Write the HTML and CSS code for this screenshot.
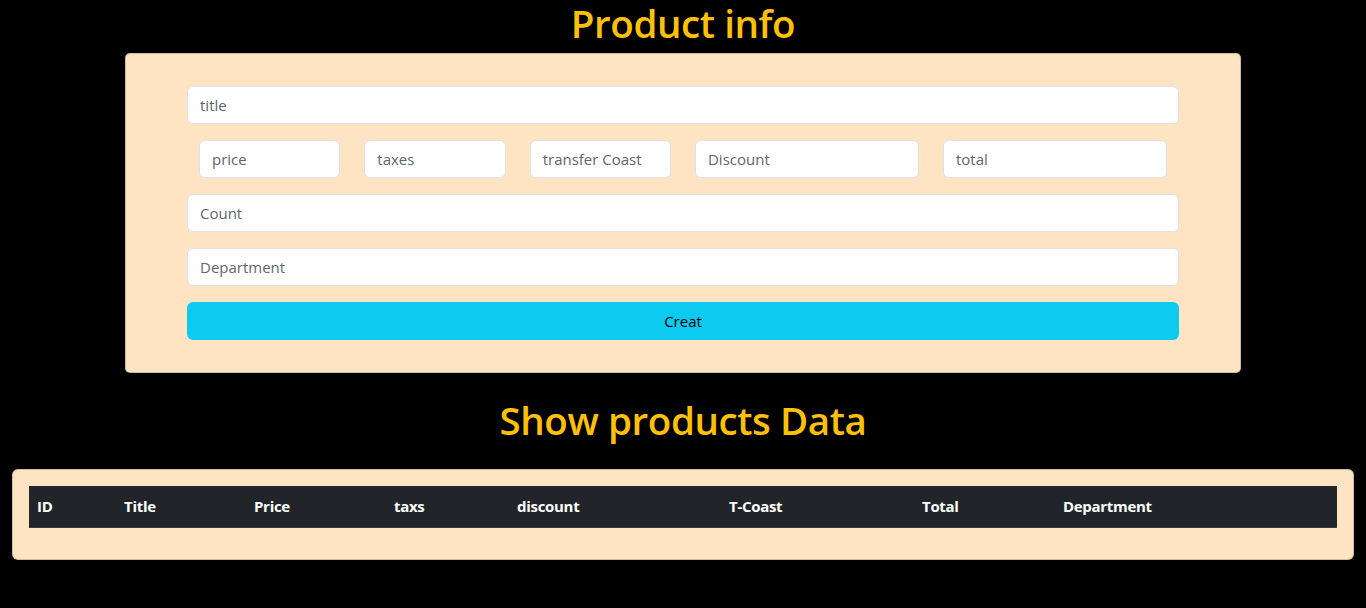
FILE: index.html
```html
<!DOCTYPE html>
<html>
<head>
<meta charset="utf-8">
<link rel="stylesheet" href="styles.css">
</head>
<body>
<div class="container">
  <h1 class="heading first">Product info</h1>
  <div class="form-card">
    <input class="field" placeholder="title">
    <div class="row">
      <div class="col c2"><input class="field" placeholder="price"></div>
      <div class="col c2"><input class="field" placeholder="taxes"></div>
      <div class="col c2"><input class="field" placeholder="transfer Coast"></div>
      <div class="col c3"><input class="field" placeholder="Discount"></div>
      <div class="col c3"><input class="field" placeholder="total"></div>
    </div>
    <input class="field" placeholder="Count">
    <input class="field" placeholder="Department">
    <button class="btn">Creat</button>
  </div>
</div>
<h1 class="heading second">Show products Data</h1>
<div class="table-card">
  <table class="table">
    <thead>
      <tr>
        <th class="w1">ID</th>
        <th class="w2">Title</th>
        <th class="w3">Price</th>
        <th class="w4">taxs</th>
        <th class="w5">discount</th>
        <th class="w6">T-Coast</th>
        <th class="w7">Total</th>
        <th class="w8">Department</th>
      </tr>
    </thead>
  </table>
</div>
</body>
</html>
```
FILE: styles.css
```css
* { box-sizing: border-box; }
html, body { margin: 0; padding: 0; }
body {
  background: #000;
  font-family: "Open Sans", "Noto Sans", sans-serif;
  font-size: 16px;
  color: #212529;
}
.container {
  width: 1116px;
  margin: 0 auto;
}
.heading {
  color: #ffc107;
  text-align: center;
  font-weight: 600;
  font-size: 38.5px;
  line-height: 46px;
  margin: 0;
  letter-spacing: -0.4px;
}
.heading.first { padding-bottom: 7px; }
.heading.second { padding-top: 24px; padding-bottom: 26px; }
.form-card {
  background: #ffe4c4;
  border: 1px solid rgba(0,0,0,0.18);
  border-radius: 5px;
  padding: 32px 61px 32px 61px;
  display: flex;
  flex-direction: column;
  gap: 16px;
}
.field {
  display: block;
  width: 100%;
  height: 38px;
  padding: 6px 12px;
  font-family: inherit;
  font-size: 15px;
  border: 1px solid #dee2e6;
  border-radius: 6px;
  background: #fff;
  color: #212529;
  outline: none;
}
.field::placeholder { color: #5f656c; opacity: 1; }
.row { display: flex; }
.col { padding: 0 12px; }
.c2 { width: 16.6667%; }
.c3 { width: 25%; }
.btn {
  display: block;
  width: 100%;
  height: 38px;
  border: none;
  border-radius: 6px;
  background: #0dcaf0;
  color: #000;
  font-family: inherit;
  font-size: 15px;
}
.table-card {
  margin: 0 12px;
  background: #ffe4c4;
  border: 1px solid rgba(0,0,0,0.18);
  border-radius: 6px;
  padding: 16px;
}
.table {
  width: 100%;
  border-collapse: collapse;
  table-layout: fixed;
  margin-bottom: 15px;
}
.table th {
  background: #212529;
  color: #fff;
  text-align: left;
  font-weight: 700;
  font-size: 15px;
  height: 41px;
  padding: 0 8px;
  border-bottom: 1px solid #373b3e;
  letter-spacing: -0.3px;
}
.w1 { width: 87px; }
.w2 { width: 130px; }
.w3 { width: 140px; }
.w4 { width: 123px; }
.w5 { width: 212px; }
.w6 { width: 193px; }
.w7 { width: 141px; }
.w8 { width: 282px; }
```
